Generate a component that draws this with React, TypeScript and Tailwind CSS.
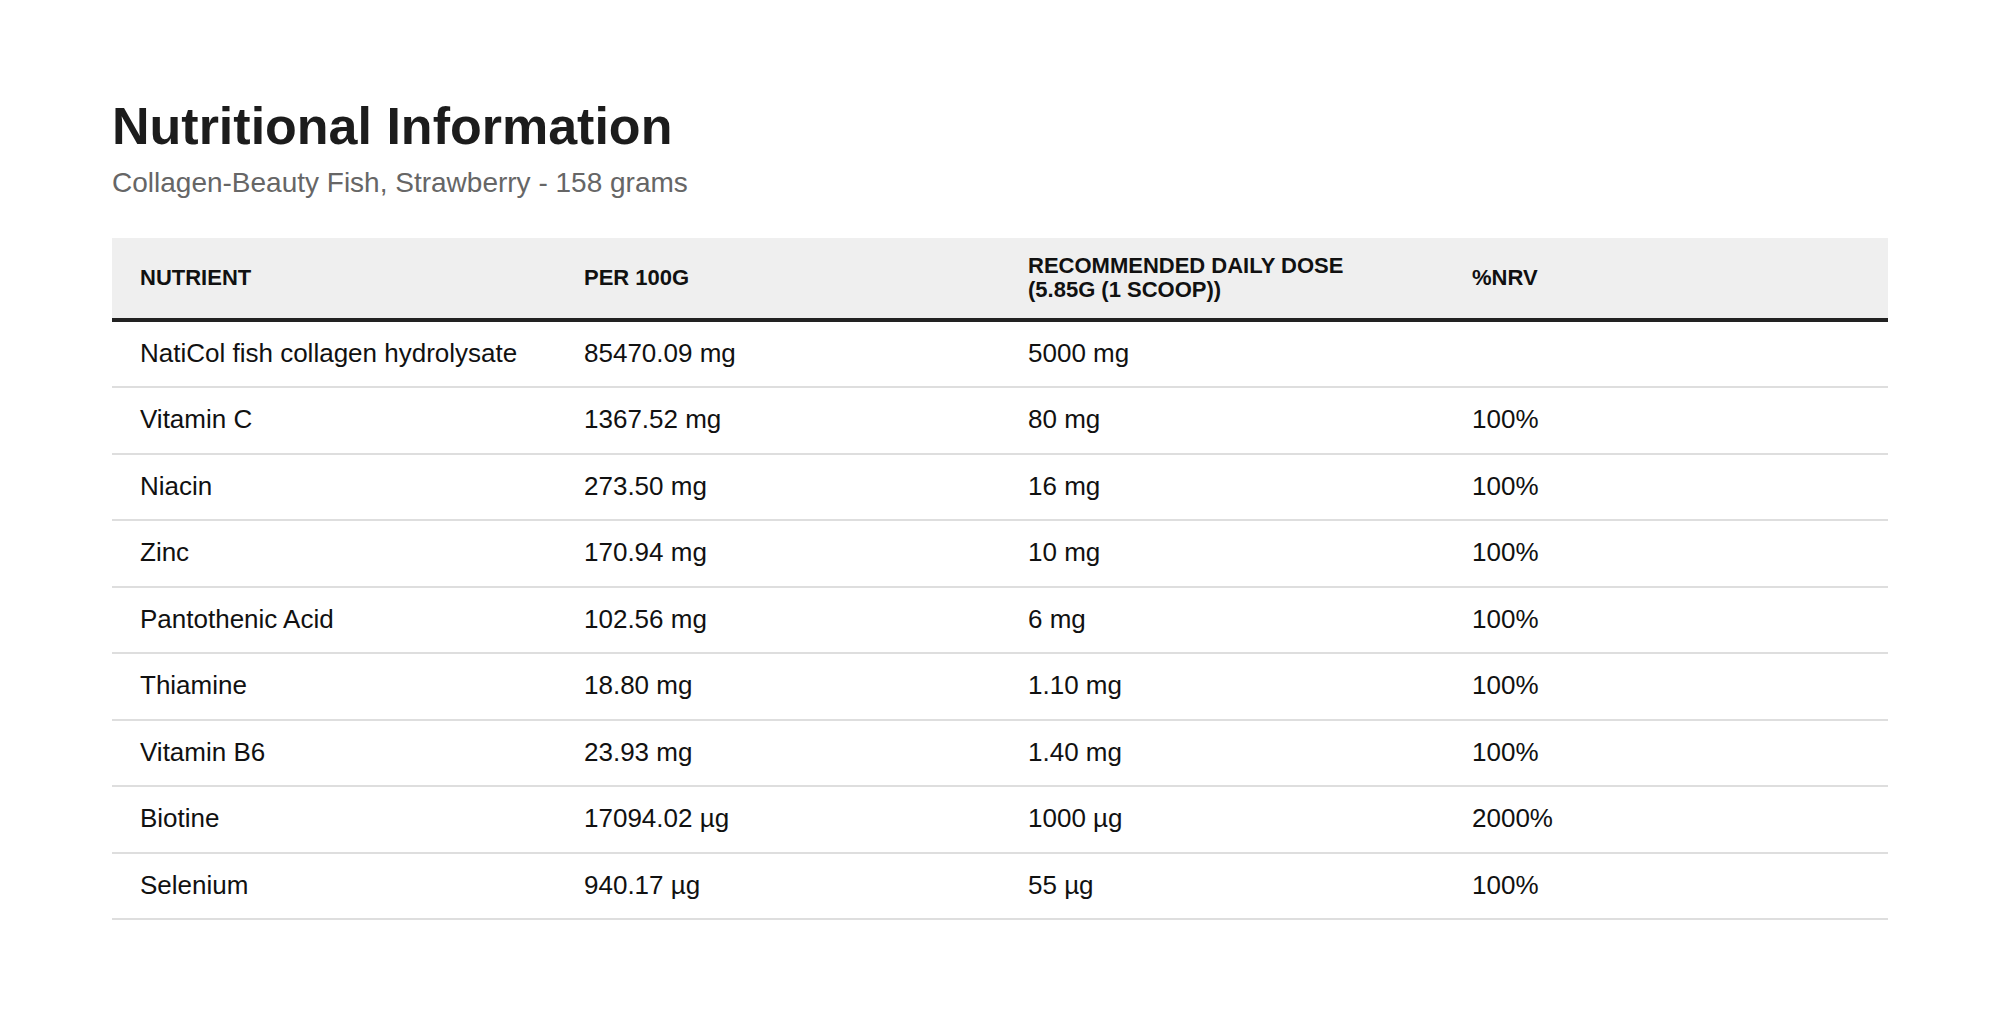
const rows = [
  { name: 'NatiCol fish collagen hydrolysate', per100: '85470.09 mg', dose: '5000 mg', nrv: '' },
  { name: 'Vitamin C', per100: '1367.52 mg', dose: '80 mg', nrv: '100%' },
  { name: 'Niacin', per100: '273.50 mg', dose: '16 mg', nrv: '100%' },
  { name: 'Zinc', per100: '170.94 mg', dose: '10 mg', nrv: '100%' },
  { name: 'Pantothenic Acid', per100: '102.56 mg', dose: '6 mg', nrv: '100%' },
  { name: 'Thiamine', per100: '18.80 mg', dose: '1.10 mg', nrv: '100%' },
  { name: 'Vitamin B6', per100: '23.93 mg', dose: '1.40 mg', nrv: '100%' },
  { name: 'Biotine', per100: '17094.02 µg', dose: '1000 µg', nrv: '2000%' },
  { name: 'Selenium', per100: '940.17 µg', dose: '55 µg', nrv: '100%' },
]

export default function App() {
  return (
    <div className="min-h-screen bg-white px-[112px] pt-[95px] pb-16 font-['Liberation_Sans',Arial,sans-serif]">
      <h1 className="text-[52px] leading-[1.2] font-bold text-[#1c1c1c]">Nutritional Information</h1>
      <p className="mt-[6px] text-[28px] leading-[1.4] text-[#666666]">
        Collagen-Beauty Fish, Strawberry - 158 grams
      </p>

      <table className="mt-[35px] w-full table-fixed border-collapse text-left text-[#111111]">
        <thead>
          <tr className="bg-[#efefef] border-b-4 border-[#222222]">
            <th className="px-[28px] py-4 text-[22px] leading-[1.1] font-bold uppercase">Nutrient</th>
            <th className="px-[28px] py-4 text-[22px] leading-[1.1] font-bold uppercase">Per 100g</th>
            <th className="px-[28px] py-4 text-[22px] leading-[1.1] font-bold uppercase">
              Recommended daily dose
              <br />
              (5.85g (1 scoop))
            </th>
            <th className="px-[28px] py-4 text-[22px] leading-[1.1] font-bold uppercase">%NRV</th>
          </tr>
        </thead>
        <tbody>
          {rows.map((r) => (
            <tr key={r.name} className="border-b-2 border-[#dedede]">
              <td className="px-[28px] pt-[15px] pb-[17px] text-[26px] leading-[1.25]">{r.name}</td>
              <td className="px-[28px] pt-[15px] pb-[17px] text-[26px] leading-[1.25]">{r.per100}</td>
              <td className="px-[28px] pt-[15px] pb-[17px] text-[26px] leading-[1.25]">{r.dose}</td>
              <td className="px-[28px] pt-[15px] pb-[17px] text-[26px] leading-[1.25]">{r.nrv}</td>
            </tr>
          ))}
        </tbody>
      </table>
    </div>
  )
}
